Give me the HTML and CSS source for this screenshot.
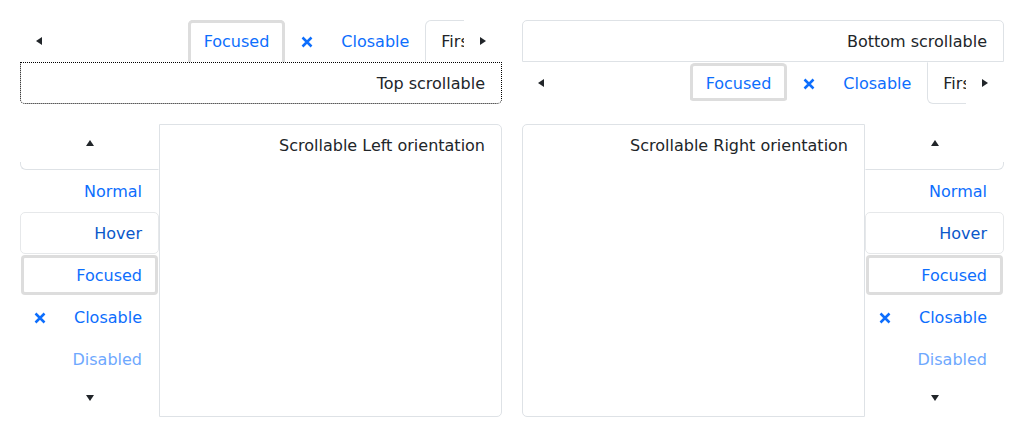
FILE: index.html
```html
<!DOCTYPE html>
<html lang="en">
<head>
<meta charset="utf-8">
<title>Scrollable tabs</title>
<link rel="stylesheet" href="styles.css">
</head>
<body>
<main class="demo">
  <!-- Top scrollable -->
  <section class="tabs-h">
    <div class="strip">
      <button class="scroll-btn" aria-label="Scroll left"><svg width="6" height="8" viewBox="0 0 6 8"><polygon points="6,0 6,8 0,4"/></svg></button>
      <div class="viewport">
        <div class="list list-h">
          <div class="tab focused ring-top">Focused</div>
          <div class="tab closable"><svg class="x" width="12" height="12" viewBox="0 0 12 12"><path d="M1.5 1.5 L10.5 10.5 M10.5 1.5 L1.5 10.5"/></svg><span>Closable</span></div>
          <div class="tab active active-top">First</div>
        </div>
      </div>
      <button class="scroll-btn" aria-label="Scroll right"><svg width="6" height="8" viewBox="0 0 6 8"><polygon points="0,0 0,8 6,4"/></svg></button>
    </div>
    <div class="panel panel-dotted">Top scrollable</div>
  </section>

  <!-- Bottom scrollable -->
  <section class="tabs-h">
    <div class="panel panel-top">Bottom scrollable</div>
    <div class="strip">
      <button class="scroll-btn" aria-label="Scroll left"><svg width="6" height="8" viewBox="0 0 6 8"><polygon points="6,0 6,8 0,4"/></svg></button>
      <div class="viewport">
        <div class="list list-h">
          <div class="tab focused ring-full">Focused</div>
          <div class="tab closable"><svg class="x" width="12" height="12" viewBox="0 0 12 12"><path d="M1.5 1.5 L10.5 10.5 M10.5 1.5 L1.5 10.5"/></svg><span>Closable</span></div>
          <div class="tab active active-bottom">First</div>
        </div>
      </div>
      <button class="scroll-btn" aria-label="Scroll right"><svg width="6" height="8" viewBox="0 0 6 8"><polygon points="0,0 0,8 6,4"/></svg></button>
    </div>
  </section>

  <!-- Left orientation -->
  <section class="tabs-v">
    <div class="vcol">
      <button class="scroll-btn vbtn" aria-label="Scroll up"><svg width="8" height="6" viewBox="0 0 8 6"><polygon points="0,6 8,6 4,0"/></svg></button>
      <div class="vviewport">
        <div class="list list-v">
          <div class="tab vtab active active-left"></div>
          <div class="tab vtab">Normal</div>
          <div class="tab vtab hover">Hover</div>
          <div class="tab vtab focused ring-full">Focused</div>
          <div class="tab vtab closable"><svg class="x" width="12" height="12" viewBox="0 0 12 12"><path d="M1.5 1.5 L10.5 10.5 M10.5 1.5 L1.5 10.5"/></svg><span>Closable</span></div>
          <div class="tab vtab disabled">Disabled</div>
        </div>
      </div>
      <button class="scroll-btn vbtn" aria-label="Scroll down"><svg width="8" height="6" viewBox="0 0 8 6"><polygon points="0,0 8,0 4,6"/></svg></button>
    </div>
    <div class="panel panel-left">Scrollable Left orientation</div>
  </section>

  <!-- Right orientation -->
  <section class="tabs-v">
    <div class="panel panel-right">Scrollable Right orientation</div>
    <div class="vcol">
      <button class="scroll-btn vbtn" aria-label="Scroll up"><svg width="8" height="6" viewBox="0 0 8 6"><polygon points="0,6 8,6 4,0"/></svg></button>
      <div class="vviewport">
        <div class="list list-v">
          <div class="tab vtab active active-right"></div>
          <div class="tab vtab">Normal</div>
          <div class="tab vtab hover">Hover</div>
          <div class="tab vtab focused ring-full">Focused</div>
          <div class="tab vtab closable"><svg class="x" width="12" height="12" viewBox="0 0 12 12"><path d="M1.5 1.5 L10.5 10.5 M10.5 1.5 L1.5 10.5"/></svg><span>Closable</span></div>
          <div class="tab vtab disabled">Disabled</div>
        </div>
      </div>
      <button class="scroll-btn vbtn" aria-label="Scroll down"><svg width="8" height="6" viewBox="0 0 8 6"><polygon points="0,0 8,0 4,6"/></svg></button>
    </div>
  </section>
</main>
</body>
</html>
```

FILE: styles.css
```css
* { box-sizing: border-box; }

html, body {
  margin: 0;
  background: #fff;
}

body {
  font-family: "DejaVu Sans", "Noto Sans", sans-serif;
  font-size: 16px;
  line-height: 24px;
  color: #212529;
}

.demo {
  display: grid;
  grid-template-columns: 482px 482px;
  grid-template-rows: 84px 293px;
  gap: 20px;
  padding: 20px;
}

/* ---------- horizontal ---------- */
.tabs-h {
  display: flex;
  flex-direction: column;
}

.strip {
  display: flex;
  height: 42px;
}

.scroll-btn {
  flex: none;
  width: 38px;
  height: 42px;
  padding: 0;
  border: 0;
  background: transparent;
  display: flex;
  align-items: center;
  justify-content: center;
}

.scroll-btn svg { fill: #212529; display: block; }

.viewport {
  flex: 1;
  min-width: 0;
  overflow: hidden;
  display: flex;
  justify-content: flex-end;
}

.list { display: flex; flex: none; }

.list-h { margin-right: -27px; }

.tab {
  height: 42px;
  padding: 9px 16px 7px;
  border: 1px solid transparent;
  color: #0d6efd;
  white-space: nowrap;
  flex: none;
}

.list-h .tab { padding: 9px 15px 7px; }

.list-h .tab.focused.ring-top {
  box-shadow: inset 3px 0 0 #ddd, inset -3px 0 0 #ddd, inset 0 3px 0 #ddd;
  border-radius: 5px 5px 0 0;
  border-width: 0;
  padding: 10px 16px 0;
}

.tab.focused.ring-full {
  box-shadow: inset 0 0 0 3px #ddd;
  border-radius: 5px;
}

.list-h .tab.ring-full {
  border-width: 1px 0 3px 0;
  padding: 9px 16px 0;
}

.closable {
  display: flex;
  align-items: center;
}

.list-h .closable { padding-top: 8px; }

.x {
  flex: none;
  display: block;
  stroke: #0d6efd;
  stroke-width: 2.5;
  fill: none;
  margin-right: 28px;
}

.active { color: #212529; }

.active-top {
  border-color: #dee2e6 #dee2e6 transparent #dee2e6;
  border-radius: 6px 6px 0 0;
}

.active-bottom {
  border-color: transparent #dee2e6 #dee2e6 #dee2e6;
  border-radius: 0 0 6px 6px;
}

.panel {
  padding: 9px 16px 7px;
  text-align: right;
  flex: none;
}

.tabs-h .panel { height: 42px; }

.panel-dotted {
  border: 1px dotted #000;
  border-radius: 0 0 5px 5px;
}

.panel-top {
  border: 1px solid #dee2e6;
  border-radius: 5px 5px 0 0;
}

/* ---------- vertical ---------- */
.tabs-v {
  display: flex;
  height: 293px;
}

.vcol {
  width: 139px;
  flex: none;
  display: flex;
  flex-direction: column;
}

.vbtn { width: 100%; height: 38px; }

.vviewport {
  height: 217px;
  overflow: hidden;
}

.list-v {
  flex-direction: column;
  margin-top: -34px;
}

.vtab {
  width: 100%;
  text-align: right;
  border-radius: 5px;
}

.vtab.closable {
  justify-content: space-between;
  padding: 9px 16px 7px 13px;
}

.vtab .x { margin-right: 0; }

.hover {
  color: #0a58ca;
  border-color: #e6e8ea;
}

.disabled { color: #6ea8fe; }

.active-left {
  border-color: #dee2e6 transparent #dee2e6 #dee2e6;
  border-radius: 6px 0 0 6px;
}

.active-right {
  border-color: #dee2e6 #dee2e6 #dee2e6 transparent;
  border-radius: 0 6px 6px 0;
}

.panel-left {
  flex: 1;
  border: 1px solid #dee2e6;
  border-radius: 0 5px 5px 0;
}

.panel-right {
  flex: 1;
  border: 1px solid #dee2e6;
  border-radius: 5px 0 0 5px;
}
```
